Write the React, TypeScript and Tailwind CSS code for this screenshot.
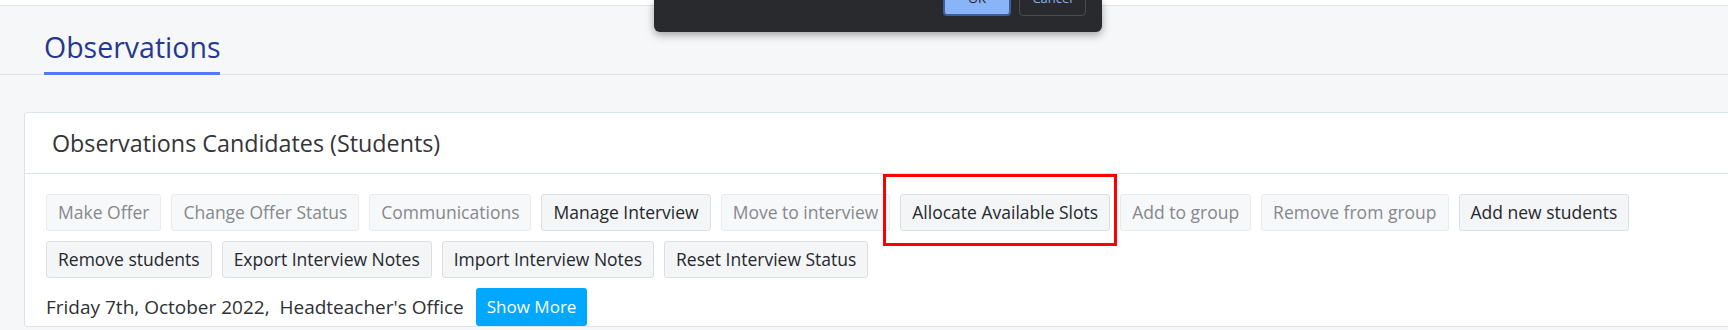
import React from "react";

const actions = [
  { label: "Make Offer", enabled: false },
  { label: "Change Offer Status", enabled: false },
  { label: "Communications", enabled: false },
  { label: "Manage Interview", enabled: true },
  { label: "Move to interview", enabled: false },
  { label: "Allocate Available Slots", enabled: true, highlight: true },
  { label: "Add to group", enabled: false },
  { label: "Remove from group", enabled: false },
  { label: "Add new students", enabled: true },
  { label: "Remove students", enabled: true },
  { label: "Export Interview Notes", enabled: true },
  { label: "Import Interview Notes", enabled: true },
  { label: "Reset Interview Status", enabled: true },
];

function ActionButton({ label, enabled }: { label: string; enabled: boolean }) {
  return (
    <button
      className={
        enabled
          ? "h-[37px] px-[11px] rounded-[3px] border border-[#dcdfe4] bg-[#f4f5f7] text-[17.5px] font-medium text-[#25282c] whitespace-nowrap"
          : "h-[37px] px-[11px] rounded-[3px] border border-[#e9ebee] bg-[#f7f8fa] text-[17.5px] text-[#85888c] whitespace-nowrap"
      }
    >
      {label}
    </button>
  );
}

export default function App() {
  return (
    <div className="relative w-full h-[330px] overflow-hidden bg-[#f6f7f9] font-['Open_Sans',sans-serif]">
      {/* top strip */}
      <div className="h-[6px] bg-white border-b border-[#e1e4e8]" />

      {/* page tabs */}
      <div className="flex border-b border-[#dfe3e8] pl-[44px] h-[69px]">
        <div className="flex flex-col justify-end">
          <span className="text-[28.5px] leading-none text-[#26388f] pb-[11px]">Observations</span>
          <div className="h-[3px] bg-[#4f7df5] -mb-px" />
        </div>
      </div>

      {/* candidates card */}
      <div className="mt-[37px] ml-[24px] -mr-[40px] bg-white border border-[#dde3ea] rounded-[3px]">
        <div className="h-[61px] flex items-center px-[27px] border-b border-[#dde3ea]">
          <h2 className="text-[23.3px] text-[#333537]">Observations Candidates (Students)</h2>
        </div>
        <div className="pt-[20px] pl-[21px]">
          <div className="flex flex-wrap gap-x-[10px] gap-y-[10px] w-[1620px]">
            {actions.map((a) =>
              a.highlight ? (
                <div key={a.label} className="relative">
                  <div className="absolute left-[-17px] right-[-7px] top-[-20px] bottom-[-15px] border-[3px] border-[#ff0000] pointer-events-none" />
                  <ActionButton label={a.label} enabled={a.enabled} />
                </div>
              ) : (
                <ActionButton key={a.label} label={a.label} enabled={a.enabled} />
              )
            )}
          </div>
          <div className="mt-[10px] flex items-center gap-[12px] text-[19px] text-[#2f3133]">
            <span>Friday 7th, October 2022,&nbsp; Headteacher's Office</span>
            <button className="h-[38px] px-[11px] rounded-[3px] bg-[#00a8ff] text-white text-[17px] font-medium">
              Show More
            </button>
          </div>
        </div>
      </div>

      {/* browser confirm dialog, partially off-screen */}
      <div className="absolute left-[654px] top-0 w-[448px] h-[32px] bg-[#292a2d] rounded-b-[6px] shadow-[0_3px_8px_rgba(0,0,0,0.35)]">
        <div className="absolute right-[16px] bottom-[16px] flex gap-[8px]">
          <button className="w-[68px] h-[30px] rounded-[4px] bg-[#8ab4f8] border-2 border-[#3d5e99] text-[13px] text-[#202124] flex items-start justify-center pt-[1px]">
            OK
          </button>
          <button className="w-[67px] h-[30px] rounded-[4px] border border-[#4a4c50] text-[13px] text-[#8ab4f8] flex items-start justify-center pt-[2px]">
            Cancel
          </button>
        </div>
      </div>
    </div>
  );
}
